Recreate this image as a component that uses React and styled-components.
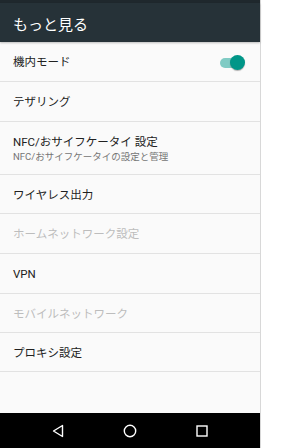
import React from "react";
import styled, { createGlobalStyle } from "styled-components";

const GlobalStyle = createGlobalStyle`
  html, body {
    margin: 0;
    padding: 0;
    background: #ffffff;
  }
  body {
    font-family: Roboto, "Noto Sans CJK JP", sans-serif;
  }
`;

const Screen = styled.div`
  width: 260px;
  height: 448px;
  display: flex;
  flex-direction: column;
  background: #fafafa;
  border-right: 1px solid #d8d8d8;
`;

const StatusBar = styled.div`
  height: 3px;
  background: #1f282d;
`;

const Toolbar = styled.div`
  height: 39px;
  display: flex;
  align-items: center;
  padding: 2px 13px 0;
  box-sizing: border-box;
  background: #263238;
  color: #ffffff;
  font-size: 15px;
  box-shadow: 0 1px 2px rgba(0, 0, 0, 0.25);
  position: relative;
  z-index: 1;
`;

const List = styled.div`
  flex: 1;
  display: flex;
  flex-direction: column;
`;

const Row = styled.div`
  height: ${p => p.$h}px;
  display: flex;
  align-items: center;
  padding: 2px 13px 0;
  border-bottom: 1.5px solid #e2e2e2;
  box-sizing: border-box;
`;

const Texts = styled.div`
  flex: 1;
  display: flex;
  flex-direction: column;
`;

const Title = styled.div`
  font-size: 11.5px;
  line-height: 15px;
  color: ${p => (p.$disabled ? "#bdbdbd" : "#212121")};
`;

const Sub = styled.div`
  font-size: 9.5px;
  line-height: 13px;
  color: #757575;
`;

const Switch = styled.div`
  position: relative;
  width: 20px;
  height: 10px;
  border-radius: 5px;
  background: #80cbc4;
  margin-right: 7px;
`;

const Thumb = styled.div`
  position: absolute;
  right: -5px;
  top: -2.5px;
  width: 15px;
  height: 15px;
  border-radius: 50%;
  background: #009688;
  box-shadow: 0 1px 1px rgba(0, 0, 0, 0.3);
`;

const NavBar = styled.div`
  height: 35px;
  background: #000000;
  display: flex;
  align-items: center;
  justify-content: space-around;
  padding: 0 22px;
`;

const rows = [
  { title: "機内モード", h: 40, toggle: true },
  { title: "テザリング", h: 40 },
  { title: "NFC/おサイフケータイ 設定", sub: "NFC/おサイフケータイの設定と管理", h: 53 },
  { title: "ワイヤレス出力", h: 39 },
  { title: "ホームネットワーク設定", h: 40, disabled: true },
  { title: "VPN", h: 40 },
  { title: "モバイルネットワーク", h: 39, disabled: true },
  { title: "プロキシ設定", h: 39 },
];

export default function App() {
  return (
    <>
      <GlobalStyle />
      <Screen>
        <StatusBar />
        <Toolbar>もっと見る</Toolbar>
        <List>
          {rows.map(r => (
            <Row key={r.title} $h={r.h}>
              <Texts>
                <Title $disabled={r.disabled}>{r.title}</Title>
                {r.sub && <Sub>{r.sub}</Sub>}
              </Texts>
              {r.toggle && (
                <Switch>
                  <Thumb />
                </Switch>
              )}
            </Row>
          ))}
        </List>
        <NavBar>
          <svg width="14" height="14" viewBox="0 0 14 14">
            <path d="M11.5 1.5 L2.5 7 L11.5 12.5 Z" fill="none" stroke="#fff" strokeWidth="1.4" strokeLinejoin="round" />
          </svg>
          <svg width="14" height="14" viewBox="0 0 14 14">
            <circle cx="7" cy="7" r="5.7" fill="none" stroke="#fff" strokeWidth="1.4" />
          </svg>
          <svg width="14" height="14" viewBox="0 0 14 14">
            <rect x="2" y="2" width="10" height="10" fill="none" stroke="#fff" strokeWidth="1.4" />
          </svg>
        </NavBar>
      </Screen>
    </>
  );
}
